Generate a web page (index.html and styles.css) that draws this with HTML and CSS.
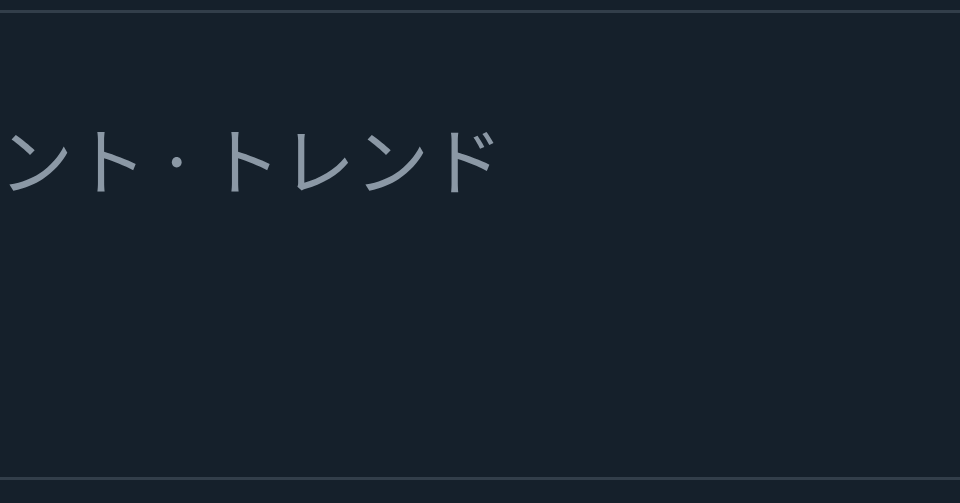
FILE: index.html
```html
<!DOCTYPE html>
<html lang="ja">
<head>
  <meta charset="UTF-8" />
  <meta name="viewport" content="width=device-width, initial-scale=1.0" />
  <title>トレンド</title>
  <link rel="stylesheet" href="styles.css">
</head>
<body>
  <div class="trend">
    <div class="category">イベント<span class="dot">·</span>トレンド</div>
  </div>
</body>
</html>
```

FILE: styles.css
```css
:root {
  --bg: #15202b;
  --border: #323e4a;
  --muted: #8b98a5;
}

body {
  margin: 0;
  padding: 0;
  background: var(--bg);
  font-family: "Noto Sans CJK JP", "Noto Sans", sans-serif;
  overflow: hidden;
  height: 503px;
}

.trend {
  margin-top: 10px;
  height: 464px;
  border-top: 3px solid var(--border);
  border-bottom: 3px solid var(--border);
  overflow: hidden;
}

.category {
  margin-top: 107px;
  margin-left: -149px;
  font-size: 74px;
  line-height: 1;
  color: var(--muted);
  white-space: nowrap;
}

.dot {
  display: inline-block;
  width: 60px;
  text-align: center;
}
```
